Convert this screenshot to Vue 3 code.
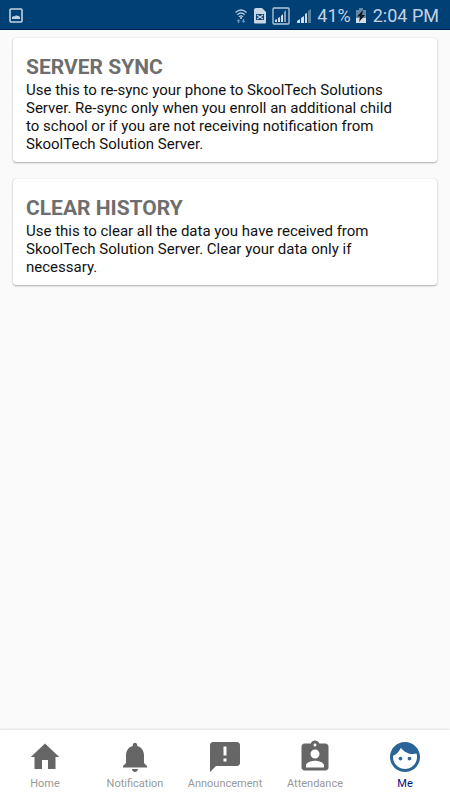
<script setup>
import { ref } from 'vue'

const cards = [
  {
    title: 'SERVER SYNC',
    text: 'Use this to re-sync your phone to SkoolTech Solutions Server. Re-sync only when you enroll an additional child to school or if you are not receiving notification from SkoolTech Solution Server.'
  },
  {
    title: 'CLEAR HISTORY',
    text: 'Use this to clear all the data you have received from SkoolTech Solution Server. Clear your data only if necessary.'
  }
]

const tabs = [
  { label: 'Home', icon: 'M10 20v-6h4v6h5v-8h2.500L12 3 2.500 12H5v8z' },
  {
    label: 'Notification',
    icon: 'M12 22c1.1 0 2-.9 2-2h-4c0 1.1.89 2 2 2zm6-6v-5c0-3.07-1.64-5.64-4.5-6.32V4c0-.83-.67-1.5-1.5-1.5s-1.5.67-1.5 1.5v.68C7.63 5.36 6 7.92 6 11v5l-2 2v1h16v-1l-2-2z'
  },
  {
    label: 'Announcement',
    icon: 'M20 2H4c-1.1 0-1.99.9-1.99 2L2 22l4-4h14c1.1 0 2-.9 2-2V4c0-1.1-.9-2-2-2zm-7 9h-2V5h2v6zm0 4h-2v-2h2v2z'
  },
  {
    label: 'Attendance',
    icon: 'M19 3h-4.18C14.4 1.84 13.3 1 12 1c-1.3 0-2.4.84-2.82 2H5c-1.1 0-2 .9-2 2v14c0 1.1.9 2 2 2h14c1.1 0 2-.9 2-2V5c0-1.1-.9-2-2-2zm-7 0c.55 0 1 .45 1 1s-.45 1-1 1-1-.45-1-1 .45-1 1-1zm0 4c1.66 0 3 1.34 3 3s-1.34 3-3 3-3-1.34-3-3 1.34-3 3-3zm6 12H6v-1.4c0-2 4-3.1 6-3.1s6 1.1 6 3.1V19z'
  },
  {
    label: 'Me',
    icon: 'M9 11.75c-.69 0-1.25.56-1.25 1.25s.56 1.25 1.25 1.25 1.25-.56 1.25-1.25-.56-1.25-1.25-1.25zm6 0c-.69 0-1.25.56-1.25 1.25s.56 1.25 1.25 1.25 1.25-.56 1.25-1.25-.56-1.25-1.25-1.25zM12 2C6.48 2 2 6.48 2 12s4.48 10 10 10 10-4.48 10-10S17.52 2 12 2zm0 18c-4.41 0-8-3.59-8-8 0-.29.02-.58.05-.86 2.36-1.05 4.23-2.98 5.21-5.37C11.07 8.33 14.05 10 17.42 10c.78 0 1.53-.09 2.25-.26.21.71.33 1.47.33 2.26 0 4.41-3.59 8-8 8z'
  }
]

const active = ref('Me')
</script>

<template>
  <div class="screen">
    <header class="status">
      <svg class="picture" width="16" height="16" viewBox="0 0 16 16">
        <rect x="2" y="1" width="12" height="13" rx="1" fill="none" stroke="#c3d3e4" stroke-width="1.6" />
        <path d="M4 11V9l2-1 1 .5L8 7l1 1 1-.5L12 9v2z" fill="#c3d3e4" />
      </svg>
      <div class="signals">
        <svg width="14" height="18" viewBox="0 0 14 18">
          <g fill="none" stroke="#b9cbdc" stroke-width="1.3">
            <path d="M1.500 5.500Q7 .5 12.500 5.500" />
            <path d="M3.300 7.700Q7 4.300 10.700 7.700" />
            <path d="M5 9.800Q7 8 9 9.800" />
          </g>
          <circle cx="7" cy="11" r="1.100" fill="#b9cbdc" />
          <path d="M4.500 12l2 2.200H5.200V16H3.900v-1.800H2.500zM9.500 16l-2-2.200h1.300V12h1.300v1.800h1.400z" fill="#6f93b3" />
        </svg>
        <svg width="14" height="18" viewBox="0 0 14 18">
          <path d="M3 1h6l4 4v10.500q0 1-1 1H2q-1 0-1-1V3q0-2 2-2z" fill="#c9d7e5" />
          <path d="M3 7h8v6H3z" fill="#0d416f" />
          <path d="M4 8l6 4M10 8l-6 4" stroke="#c9d7e5" stroke-width="1.300" />
        </svg>
        <svg width="18" height="18" viewBox="0 0 18 18">
          <rect x="1" y="1" width="16" height="16" rx="1" fill="none" stroke="#b3c8dc" stroke-width="1.300" />
          <path d="M3 15v-2l2-1v3zM6 15v-4l2-1v5zM9 15V9l2-2v8z" fill="#d3deea" />
          <path d="M12 15V5l2-2v12z" fill="#7f9fbd" />
        </svg>
        <svg width="18" height="18" viewBox="0 0 18 18">
          <path d="M2 16v-2l3-2v4zM6 16v-5l3-2v7z" fill="#d3deea" />
          <path d="M10 16V7l2-1v10z" fill="#d3deea" />
          <path d="M13 16V4l3-2v14z" fill="#55809f" />
        </svg>
      </div>
      <span class="percent">41%</span>
      <svg class="battery" width="12" height="18" viewBox="0 0 12 18">
        <path d="M4 1h4v2h3v8H1V3h3z" fill="#6488a8" />
        <path d="M1 11h10v5H1z" fill="#d3deea" />
        <path d="M8 3L2 9.500h3L4 15l6-7H7z" fill="#101820" />
      </svg>
      <time class="clock">2:04 PM</time>
    </header>

    <main class="content">
      <article v-for="card in cards" :key="card.title" class="card">
        <h2>{{ card.title }}</h2>
        <p>{{ card.text }}</p>
      </article>
    </main>

    <nav class="tabs">
      <button
        v-for="tab in tabs"
        :key="tab.label"
        type="button"
        class="tab"
        :class="{ active: tab.label === active }"
        @click="active = tab.label"
      >
        <svg class="icon" viewBox="0 0 24 24" aria-hidden="true"><path :d="tab.icon" /></svg>
        <span>{{ tab.label }}</span>
      </button>
    </nav>
  </div>
</template>

<style>
body {
  background: #fafafa;
}
</style>

<style scoped>
.screen {
  display: flex;
  flex-direction: column;
  min-height: 100vh;
  font-family: Roboto, "Liberation Sans", sans-serif;
  background: #fafafa;
}
.status {
  box-sizing: border-box;
  display: flex;
  align-items: center;
  height: 30px;
  padding: 2px 11px 0 8px;
  border-bottom: 1px solid #002057;
  background: #004075;
  color: #c3d3e4;
  font-size: 18px;
  line-height: 22px;
}
.signals {
  display: flex;
  gap: 5px;
  margin-left: auto;
}
.percent {
  margin-left: 4px;
}
.battery {
  margin: 0 6px 0 4px;
}
.content {
  flex: 1;
  display: flex;
  flex-direction: column;
  gap: 17px;
  padding: 8px 13px;
}
.card {
  padding: 16px 36px 9px 13px;
  border-radius: 3px;
  background: #fff;
  box-shadow: 0 1px 2px rgba(0, 0, 0, 0.3), 0 0 1px rgba(0, 0, 0, 0.2);
}
h2 {
  margin: 0 0 1px;
  color: #6e6e6e;
  font-size: 21px;
  line-height: 26px;
  font-weight: 700;
}
p {
  margin: 0;
  color: #111;
  font-size: 15px;
  line-height: 18px;
}
.tabs {
  display: flex;
  height: 70px;
  background: #fff;
  box-shadow: 0 -1px 2px rgba(0, 0, 0, 0.1);
}
.tab {
  flex: 1;
  display: flex;
  flex-direction: column;
  align-items: center;
  gap: 2px;
  min-width: 0;
  padding: 9px 0 0;
  border: 0;
  background: none;
  color: #999;
  font-family: inherit;
  font-size: 11px;
  line-height: 14px;
}
.icon {
  width: 36px;
  height: 36px;
  fill: #666;
}
.tab.active {
  color: #000f80;
}
.active .icon {
  fill: #2b6496;
}
</style>
